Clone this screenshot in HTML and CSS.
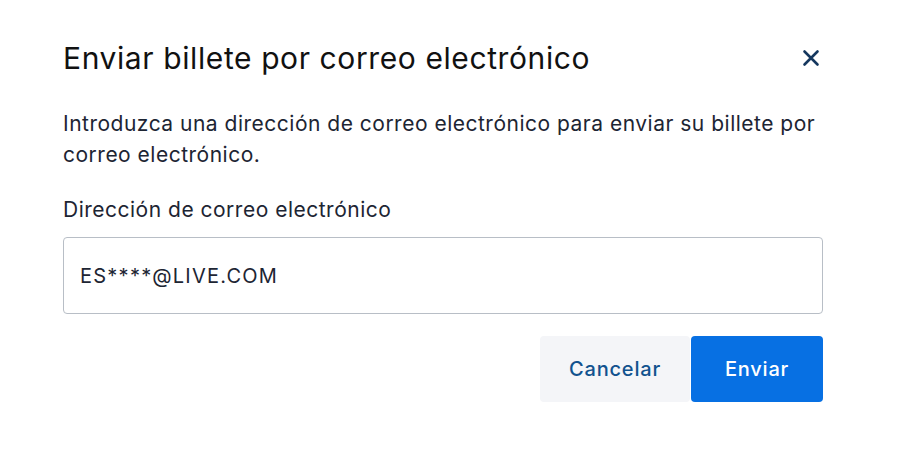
FILE: index.html
```html
<!DOCTYPE html>
<html lang="es">
<head>
<meta charset="utf-8">
<link rel="stylesheet" href="styles.css">
</head>
<body>
<div class="dialog">
  <div class="header">
    <h1 class="title">Enviar billete por correo electrónico</h1>
    <button class="close" aria-label="Cerrar">
      <svg width="18" height="18" viewBox="0 0 18 18"><path d="M2.5 2.5 L15.5 15.5 M15.5 2.5 L2.5 15.5" stroke="#15375e" stroke-width="2.6" stroke-linecap="round"/></svg>
    </button>
  </div>
  <p class="desc">Introduzca una dirección de correo electrónico para enviar su billete por correo electrónico.</p>
  <label class="label">Dirección de correo electrónico</label>
  <div class="input">ES****@LIVE.COM</div>
  <div class="actions">
    <button class="btn cancel">Cancelar</button>
    <button class="btn send">Enviar</button>
  </div>
</div>
</body>
</html>
```
FILE: styles.css
```css
html, body { margin: 0; padding: 0; background: #fff; }
body { font-family: Inter, "Noto Sans", sans-serif; color: #161d2b; }
.dialog { width: 760px; padding: 35px 0 0 63px; }
.header { display: flex; align-items: center; justify-content: space-between; height: 46px; }
.title { margin: 0; font-size: 30px; font-weight: 400; color: #111; letter-spacing: 0.6px; }
.close { background: none; border: 0; padding: 0; margin-right: 3px; width: 18px; height: 18px; display: flex; }
.desc { margin: 27px 0 0; font-size: 21px; line-height: 31px; color: #1d2533; letter-spacing: 0.5px; }
.label { display: block; margin-top: 24px; font-size: 21px; line-height: 31px; color: #1d2533; letter-spacing: 0.5px; }
.input { margin-top: 12px; border: 1px solid #b8bec6; border-radius: 4px; box-sizing: border-box; height: 77px; display: flex; align-items: center; padding-left: 16px; font-size: 20px; color: #1d2533; letter-spacing: 1.25px; }
.actions { display: flex; justify-content: flex-end; margin-top: 22px; gap: 1px; }
.btn { height: 66px; border: 0; border-radius: 4px; font-family: Inter, sans-serif; font-size: 20px; font-weight: 500; letter-spacing: 0.8px; }
.cancel { width: 150px; background: #f4f5f8; color: #11528e; }
.send { width: 132px; background: #0770e3; color: #fff; }
```
